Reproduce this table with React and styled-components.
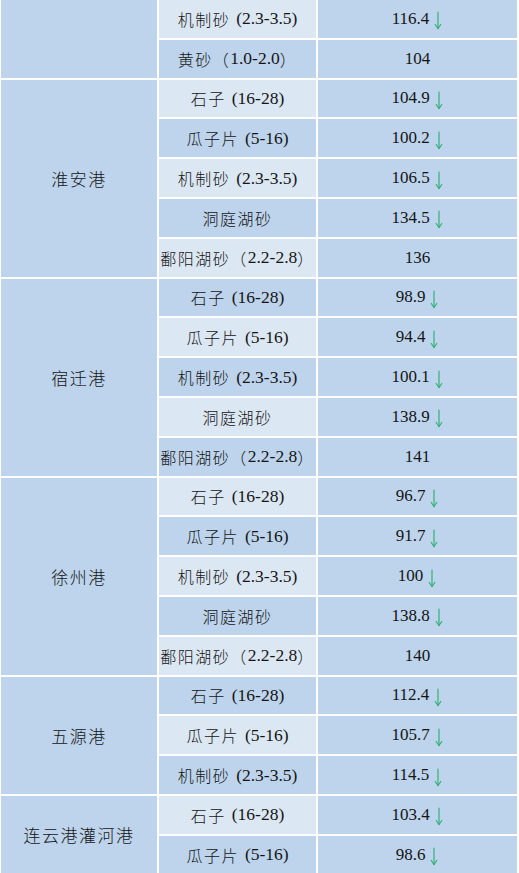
import React from "react";
import styled, { createGlobalStyle } from "styled-components";

const GlobalStyle = createGlobalStyle`
  html, body {
    margin: 0;
    padding: 0;
    background: #ffffff;
  }
  body {
    font-family: "Liberation Serif", "Noto Sans CJK SC", serif;
    color: #151515;
  }
`;

const Table = styled.div`
  display: grid;
  grid-template-columns: 156px 157px 1fr;
  grid-auto-rows: 37.8px;
  gap: 2px;
  padding: 0 2px 0 1px;
  height: 873px;
  overflow: hidden;
  box-sizing: border-box;
`;

const PortCell = styled.div`
  grid-row: span ${(p) => p.$span};
  background: #bdd4ec;
  display: flex;
  align-items: center;
  justify-content: center;
  font-family: "Noto Sans CJK SC", sans-serif;
  font-weight: 300;
  font-size: 17px;
  letter-spacing: 1.5px;
`;

const ProductCell = styled.div`
  background: ${(p) => (p.$light ? "#dce7f4" : "#bdd4ec")};
  display: flex;
  align-items: center;
  justify-content: center;
  font-size: 17.5px;
  white-space: pre;
`;

const Cjk = styled.span`
  font-family: "Noto Sans CJK SC", sans-serif;
  font-weight: 300;
  font-size: 16px;
  letter-spacing: 1.5px;
`;

const Gap = styled.span`
  display: inline-block;
  width: ${(p) => p.$w}px;
`;

const PriceCell = styled.div`
  background: #bdd4ec;
  display: flex;
  align-items: center;
  justify-content: center;
  gap: 4px;
  font-size: 17px;
`;

const Arrow = () => (
  <svg width="10" height="19" viewBox="0 0 10 19" style={{ marginTop: 4 }}>
    <g stroke="#33b07a" strokeWidth="1.2" fill="none" strokeLinecap="round">
      <line x1="5" y1="1" x2="5" y2="17.5" />
      <polyline points="2.2,13.5 5,17.5 7.8,13.5" />
    </g>
  </svg>
);

const groups = [
  {
    port: "",
    rows: [
      ["机制砂", "(2.3-3.5)", "116.4", true],
      ["黄砂", "（1.0-2.0）", "104", false],
    ],
  },
  {
    port: "淮安港",
    rows: [
      ["石子", "(16-28)", "104.9", true],
      ["瓜子片", "(5-16)", "100.2", true],
      ["机制砂", "(2.3-3.5)", "106.5", true],
      ["洞庭湖砂", "", "134.5", true],
      ["鄱阳湖砂", "（2.2-2.8）", "136", false],
    ],
  },
  {
    port: "宿迁港",
    rows: [
      ["石子", "(16-28)", "98.9", true],
      ["瓜子片", "(5-16)", "94.4", true],
      ["机制砂", "(2.3-3.5)", "100.1", true],
      ["洞庭湖砂", "", "138.9", true],
      ["鄱阳湖砂", "（2.2-2.8）", "141", false],
    ],
  },
  {
    port: "徐州港",
    rows: [
      ["石子", "(16-28)", "96.7", true],
      ["瓜子片", "(5-16)", "91.7", true],
      ["机制砂", "(2.3-3.5)", "100", true],
      ["洞庭湖砂", "", "138.8", true],
      ["鄱阳湖砂", "（2.2-2.8）", "140", false],
    ],
  },
  {
    port: "五源港",
    rows: [
      ["石子", "(16-28)", "112.4", true],
      ["瓜子片", "(5-16)", "105.7", true],
      ["机制砂", "(2.3-3.5)", "114.5", true],
    ],
  },
  {
    port: "连云港灌河港",
    rows: [
      ["石子", "(16-28)", "103.4", true],
      ["瓜子片", "(5-16)", "98.6", true],
    ],
  },
];

const Spec = ({ text }) => {
  if (!text) return null;
  if (text.startsWith("（")) {
    return (
      <>
        <Cjk>（</Cjk>
        {text.slice(1, -1)}
        <Cjk>）</Cjk>
      </>
    );
  }
  return (
    <>
      <Gap $w={6} />
      {text}
    </>
  );
};

export default function App() {
  let idx = 0;
  return (
    <>
      <GlobalStyle />
      <Table>
        {groups.map((g, gi) =>
          g.rows.map((r, ri) => {
            const light = idx % 2 === 0;
            idx++;
            return (
              <React.Fragment key={gi + "-" + ri}>
                {ri === 0 && <PortCell $span={g.rows.length}>{g.port}</PortCell>}
                <ProductCell $light={light}>
                  <Cjk>{r[0]}</Cjk>
                  <Spec text={r[1]} />
                </ProductCell>
                <PriceCell>
                  <span>{r[2]}</span>
                  {r[3] && <Arrow />}
                </PriceCell>
              </React.Fragment>
            );
          })
        )}
      </Table>
    </>
  );
}
